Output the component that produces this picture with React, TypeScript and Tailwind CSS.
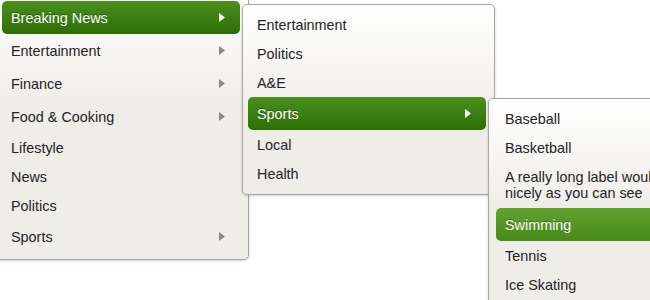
import React from "react";

type Item = { label: React.ReactNode; arrow?: boolean; active?: "dark" | "light"; tall?: boolean; multi?: boolean };

function Arrow({ white }: { white?: boolean }) {
  return (
    <svg width="6" height="9" viewBox="0 0 6 9" className="shrink-0">
      <polygon points="0,0 6,4.5 0,9" fill={white ? "#ffffff" : "#8a8a8a"} />
    </svg>
  );
}

function Row({ item }: { item: Item }) {
  const h = item.multi ? "py-[7px]" : item.tall ? "h-[33px]" : "h-[29px]";
  const act =
    item.active === "dark"
      ? "bg-[linear-gradient(to_bottom,#4b8f20,#2c6e04)] text-white [text-shadow:0_-1px_0_rgba(0,0,0,0.35)]"
      : item.active === "light"
      ? "bg-[linear-gradient(to_bottom,#62a232,#468a18)] text-white [text-shadow:0_-1px_0_rgba(0,0,0,0.3)]"
      : "text-[#232326]";
  return (
    <div className={`flex items-center justify-between rounded-[5px] pl-[9px] pr-[15px] leading-[16px] ${h} ${act}`}>
      <span>{item.label}</span>
      {item.arrow && <Arrow white={!!item.active} />}
    </div>
  );
}

function Menu({ items, className }: { items: Item[]; className: string }) {
  return (
    <div
      className={`absolute w-[253px] rounded-[5px] border border-[#a8a6a1] bg-[linear-gradient(to_bottom,#ffffff_0px,#efede8_110px)] pt-[5px] pb-[6px] pr-[8px] shadow-[0_1px_3px_rgba(0,0,0,0.18)] ${className}`}
    >
      {items.map((it, i) => (
        <Row key={i} item={it} />
      ))}
    </div>
  );
}

export default function App() {
  const m1: Item[] = [
    { label: "Breaking News", arrow: true, tall: true, active: "dark" },
    { label: "Entertainment", arrow: true, tall: true },
    { label: "Finance", arrow: true, tall: true },
    { label: "Food & Cooking", arrow: true, tall: true },
    { label: "Lifestyle" },
    { label: "News" },
    { label: "Politics" },
    { label: "Sports", arrow: true, tall: true },
  ];
  const m2: Item[] = [
    { label: "Entertainment" },
    { label: "Politics" },
    { label: "A&E" },
    { label: "Sports", arrow: true, tall: true, active: "dark" },
    { label: "Local" },
    { label: "Health" },
  ];
  const m3: Item[] = [
    { label: "Baseball" },
    { label: "Basketball" },
    { label: "A really long label would wrap nicely as you can see", multi: true },
    { label: "Swimming", arrow: true, tall: true, active: "light" },
    { label: "Tennis" },
    { label: "Ice Skating" },
  ];
  return (
    <div className="relative h-[300px] w-[650px] overflow-hidden bg-white font-['Liberation_Sans',Arial,sans-serif] text-[14.4px]">
      <Menu items={m1} className="left-[-4px] top-[-5px] z-10 pl-[5px]" />
      <Menu items={m2} className="left-[242px] top-[4px] z-20 pl-[5px]" />
      <Menu items={m3} className="left-[488px] top-[98px] z-30 pl-[7px]" />
    </div>
  );
}
